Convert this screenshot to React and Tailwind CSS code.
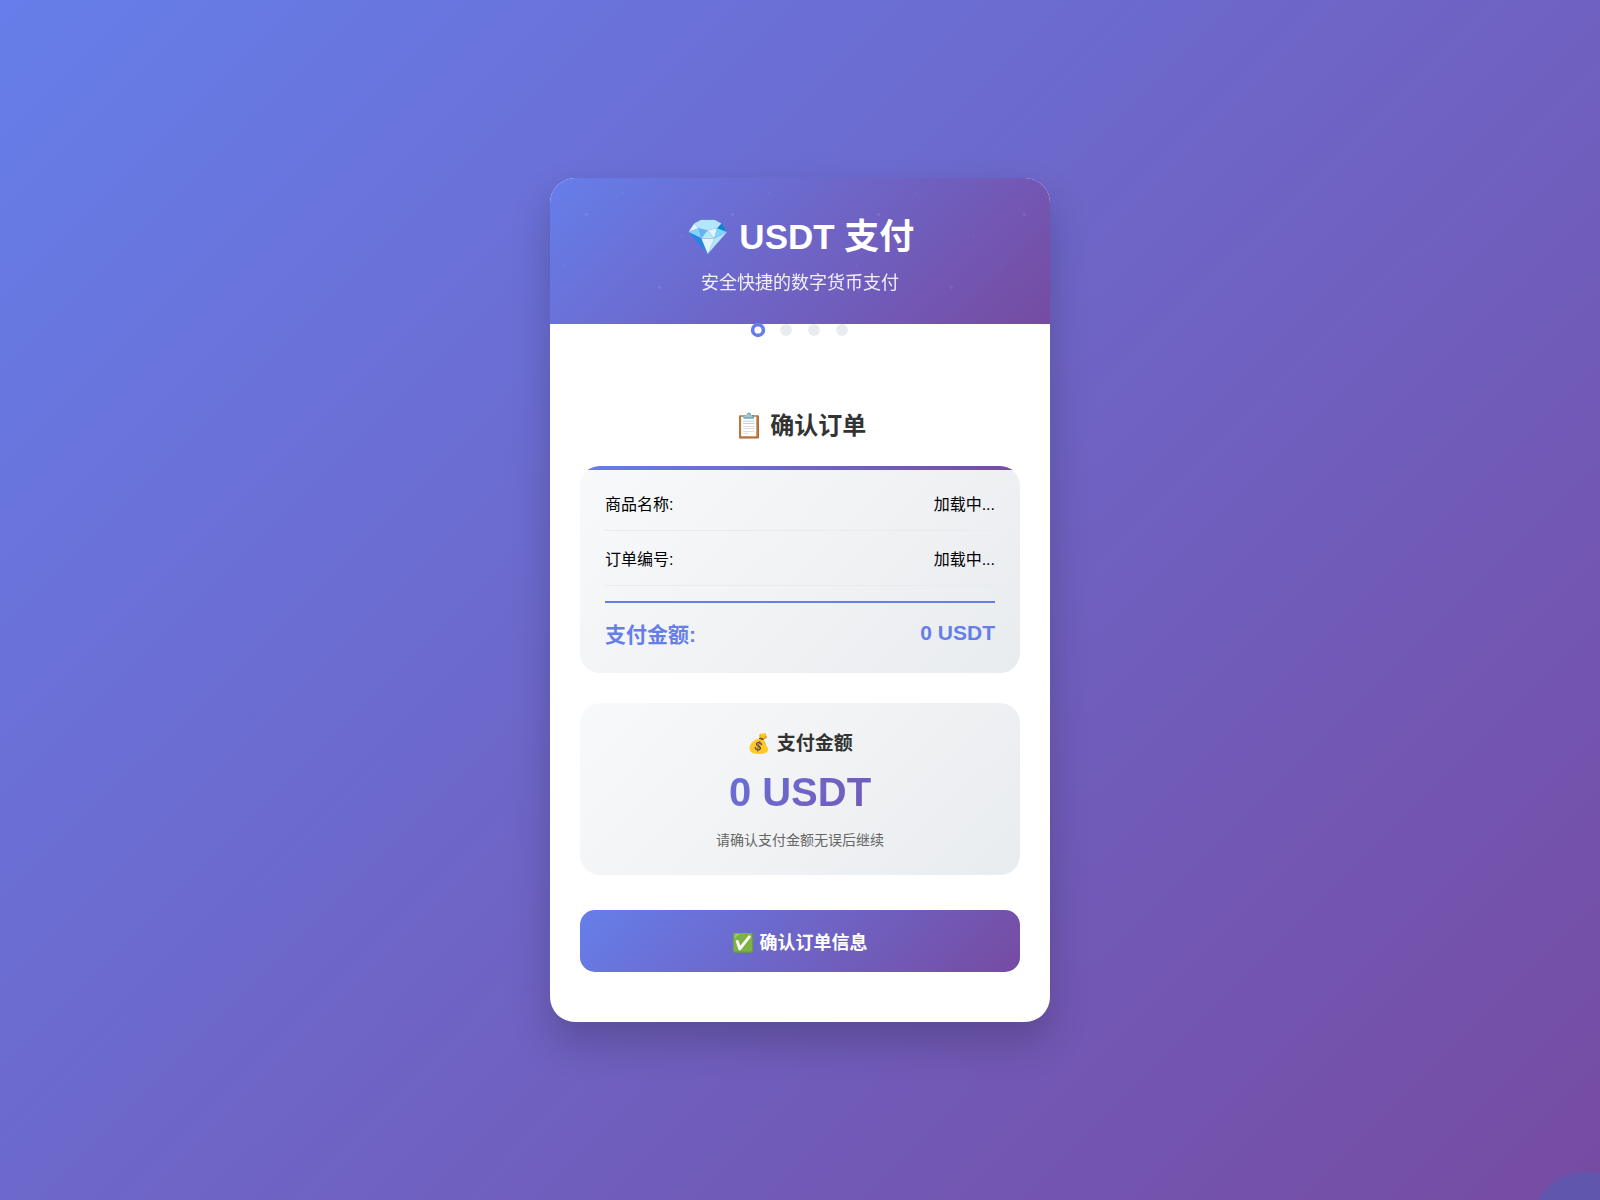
const rows = [
  { label: "商品名称:", value: "加载中..." },
  { label: "订单编号:", value: "加载中..." },
];

const HeaderDots = () => (
  <svg
    className="absolute inset-0 w-full h-full"
    fill="white"
    fillOpacity="0.1"
    aria-hidden="true"
  >
    <pattern
      id="dots"
      width="146"
      height="146"
      patternUnits="userSpaceOnUse"
      viewBox="0 0 100 100"
    >
      <circle cx="25" cy="25" r="1" />
      <circle cx="75" cy="75" r="1" />
      <circle cx="50" cy="10" r="0.5" />
      <circle cx="10" cy="60" r="0.5" />
      <circle cx="90" cy="40" r="0.5" />
    </pattern>
    <rect width="100%" height="100%" fill="url(#dots)" fillOpacity="1" />
  </svg>
);

const StepDots = () => (
  <div className="flex justify-center gap-4">
    <span className="relative w-3 h-3 rounded-full border-3 border-[#667eea] bg-white scale-120"></span>
    <span className="w-3 h-3 rounded-full bg-[#e9ecef]"></span>
    <span className="w-3 h-3 rounded-full bg-[#e9ecef]"></span>
    <span className="w-3 h-3 rounded-full bg-[#e9ecef]"></span>
  </div>
);

const App = () => {
  return (
    <div className="relative overflow-hidden min-h-screen flex items-center justify-center p-5 bg-[linear-gradient(135deg,#667eea_0%,#764ba2_100%)] font-['Liberation_Sans','Noto_Sans_CJK_SC',sans-serif] leading-[normal] text-black">
      <main className="w-full max-w-[500px] bg-white rounded-[25px] overflow-hidden shadow-[0_20px_40px_rgba(0,0,0,0.2)]">
        <header className="relative px-[30px] pt-[30px] pb-7 text-center text-white bg-[linear-gradient(135deg,#667eea_0%,#764ba2_100%)]">
          <HeaderDots />
          <h1 className="relative mb-3 text-[35px] font-bold">💎 USDT 支付</h1>
          <p className="relative text-[18px] leading-[25px] opacity-90">
            安全快捷的数字货币支付
          </p>
        </header>

        <StepDots />

        <section className="px-[30px] pt-[74px] pb-[50px]">
          <h2 className="mb-6 text-center text-2xl font-bold text-[#333333]">
            📋 确认订单
          </h2>

          <div className="relative overflow-hidden mb-[30px] p-[25px] rounded-[20px] bg-[linear-gradient(135deg,#f8f9fa_0%,#e9ecef_100%)]">
            <div className="absolute top-0 left-0 w-full h-1 bg-[linear-gradient(90deg,#667eea,#764ba2)]"></div>
            {rows.map((row) => (
              <div
                key={row.label}
                className="flex justify-between mb-[15px] pb-[15px] border-b border-[#e9ecef]"
              >
                <span>{row.label}</span>
                <span>{row.value}</span>
              </div>
            ))}
            <div className="flex items-center justify-between pt-[15px] border-t-2 border-[#667eea] text-[21px] font-bold text-[#667eea]">
              <span>支付金额:</span>
              <span>0 USDT</span>
            </div>
          </div>

          <div className="mb-[35px] p-[25px] rounded-[20px] text-center bg-[linear-gradient(135deg,#f8f9fa_0%,#e9ecef_100%)]">
            <h3 className="mb-[15px] text-[19px] font-bold text-[#333333]">
              💰 支付金额
            </h3>
            <div className="mb-[15px] text-[40px] font-bold text-transparent bg-clip-text bg-[linear-gradient(135deg,#667eea_0%,#764ba2_100%)]">
              0 USDT
            </div>
            <p className="text-sm text-[#666666]">请确认支付金额无误后继续</p>
          </div>

          <button
            type="button"
            className="w-full p-[18px] rounded-[15px] text-[18px] font-bold text-white cursor-pointer bg-[linear-gradient(135deg,#667eea_0%,#764ba2_100%)]"
          >
            ✅ 确认订单信息
          </button>
        </section>
      </main>

      <div className="absolute -bottom-[82px] -right-[41px] w-[110px] h-[110px] rounded-full bg-[#6056ae]"></div>
    </div>
  );
};

export default App;
